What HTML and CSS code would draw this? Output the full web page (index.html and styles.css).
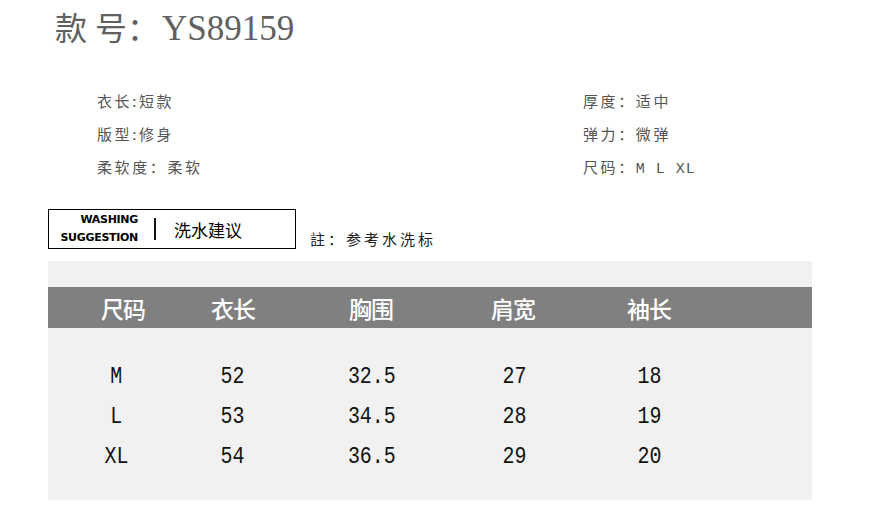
FILE: index.html
```html
<!DOCTYPE html>
<html lang="zh">
<head>
<meta charset="utf-8">
<title>款号：YS89159</title>
<link rel="stylesheet" href="styles.css">
</head>
<body>
<div class="page">
  <h1 class="title"><span class="cjk"><span class="k1">款</span>号：</span><span class="code">YS89159</span></h1>

  <div class="specs">
    <div class="spec-col">
      <div class="spec">衣长:短款</div>
      <div class="spec">版型:修身</div>
      <div class="spec">柔软度：柔软</div>
    </div>
    <div class="spec-col right">
      <div class="spec">厚度：适中</div>
      <div class="spec">弹力：微弹</div>
      <div class="spec">尺码：<span class="sizes">M L XL</span></div>
    </div>
  </div>

  <div class="wash-row">
    <div class="wash-box">
      <div class="wash-en"><span>WASHING</span><span>SUGGESTION</span></div>
      <div class="wash-bar"></div>
      <div class="wash-cn">洗水建议</div>
    </div>
    <div class="note">註：参考水洗标</div>
  </div>

  <div class="panel">
    <div class="head-row">
      <div>尺码</div><div>衣长</div><div>胸围</div><div>肩宽</div><div>袖长</div>
    </div>
    <div class="rows">
      <div class="data-row"><div><span>M</span></div><div><span>52</span></div><div><span>32.5</span></div><div><span>27</span></div><div><span>18</span></div></div>
      <div class="data-row"><div><span>L</span></div><div><span>53</span></div><div><span>34.5</span></div><div><span>28</span></div><div><span>19</span></div></div>
      <div class="data-row"><div><span>XL</span></div><div><span>54</span></div><div><span>36.5</span></div><div><span>29</span></div><div><span>20</span></div></div>
    </div>
  </div>
</div>
</body>
</html>
```
FILE: styles.css
```css
* { box-sizing: border-box; }
html, body { margin: 0; padding: 0; background: #fff; }
body {
  font-family: "Noto Sans CJK SC", "Noto Sans", sans-serif;
  color: #333;
}
.page { width: 875px; height: 528px; position: relative; overflow: hidden; }

.title {
  margin: 0;
  padding: 8px 0 0 55px;
  height: 44px;
  font-weight: normal;
  font-size: 32px;
  line-height: 36px;
  color: #606060;
  display: flex;
  align-items: baseline;
}
.title .cjk { font-family: "Noto Sans CJK SC", sans-serif; font-feature-settings: "halt"; }
.title .k1 { margin-right: 8px; }
.title .code { font-family: "Liberation Serif", "Noto Sans CJK SC", serif; font-size: 35px; margin-left: 19px; }

.specs {
  display: flex;
  padding: 40px 0 0 97px;
  height: 200px;
}
.spec-col { display: flex; flex-direction: column; width: 486px; flex-shrink: 0; }
.spec-col.right { width: auto; flex: 1; }
.spec {
  font-size: 15px;
  line-height: 33px;
  height: 33px;
  letter-spacing: 2.6px;
  color: #555;
}
.sizes { font-family: "Liberation Mono", monospace; letter-spacing: 1px; }

.wash-row {
  display: flex;
  align-items: flex-end;
  padding-left: 48px;
  margin-top: -35px;
}
.wash-box {
  width: 248px;
  height: 40px;
  border: 1px solid #000;
  display: flex;
  align-items: center;
}
.wash-en {
  width: 89px;
  display: flex;
  flex-direction: column;
  align-items: flex-end;
  font-family: "DejaVu Sans", "Liberation Sans", sans-serif;
  font-weight: bold;
  font-size: 11px;
  line-height: 18px;
  color: #000;
  letter-spacing: -0.3px;
}
.wash-bar {
  width: 2px;
  height: 22px;
  background: #111;
  margin: 0 18px 0 16px;
}
.wash-cn { font-size: 17px; color: #000; }
.note {
  margin-left: 14px;
  font-size: 15px;
  letter-spacing: 3px;
  color: #222;
  line-height: 20px;
}

.panel {
  margin: 12px 0 0 48px;
  width: 764px;
  height: 239px;
  background: #f1f1f1;
  padding-top: 26px;
}
.head-row {
  height: 41px;
  background: #808080;
  display: grid;
  grid-template-columns: 100px 120px 156px 128px 144px;
  padding-left: 25px;
  align-items: center;
  color: #fff;
  font-weight: 500;
  font-size: 23px;
  letter-spacing: -1px;
  text-align: center;
}
.rows { padding-top: 28px; }
.data-row {
  height: 40px;
  display: grid;
  grid-template-columns: 100px 132px 148px 136px 134px;
  padding-left: 18px;
  align-items: center;
  text-align: center;
  font-family: "Liberation Mono", monospace;
  font-size: 24px;
  color: #111;
}
.data-row span { display: inline-block; transform: scaleX(0.83); }
```
